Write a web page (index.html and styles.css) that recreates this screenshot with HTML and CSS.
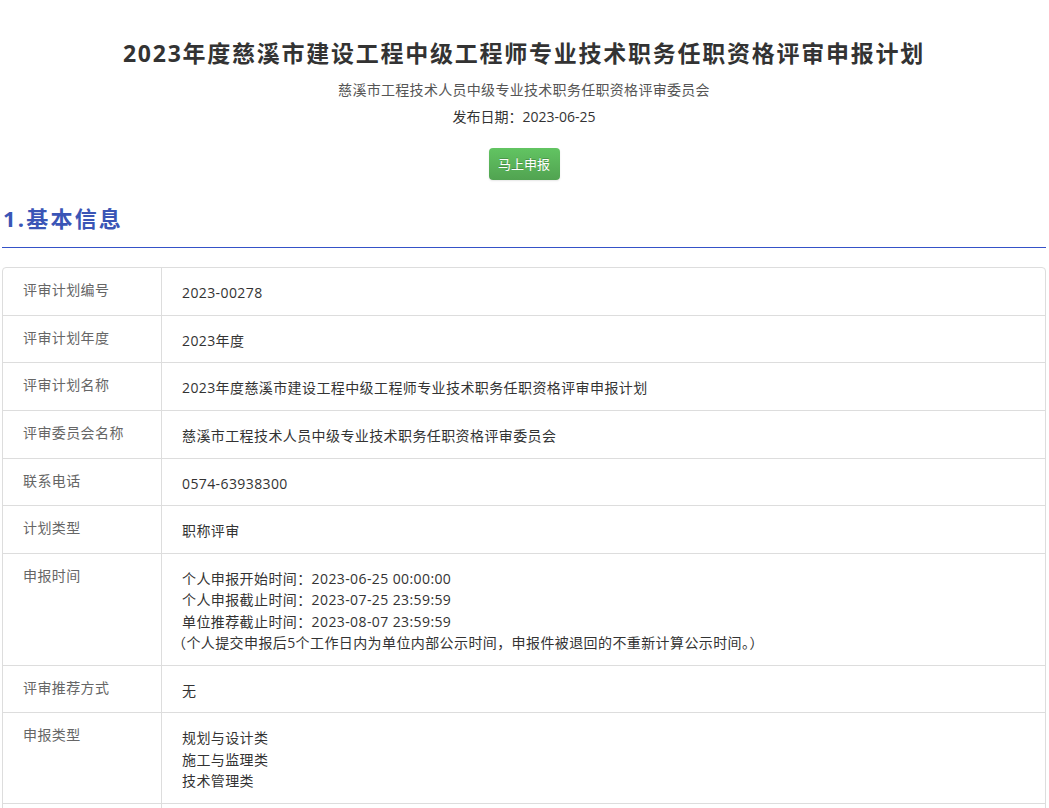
FILE: index.html
```html
<!DOCTYPE html>
<html lang="zh-CN">
<head>
<meta charset="utf-8">
<title>2023年度慈溪市建设工程中级工程师专业技术职务任职资格评审申报计划</title>
<link rel="stylesheet" href="styles.css">
</head>
<body>
<div class="page">
  <header class="head">
    <h1 class="title">2023年度慈溪市建设工程中级工程师专业技术职务任职资格评审申报计划</h1>
    <p class="org">慈溪市工程技术人员中级专业技术职务任职资格评审委员会</p>
    <p class="date">发布日期：2023-06-25</p>
    <div class="actions"><a class="btn" href="#">马上申报</a></div>
  </header>
  <h2 class="section">1.基本信息</h2>
  <div class="info">
    <div class="row"><div class="label">评审计划编号</div><div class="value">2023-00278</div></div>
    <div class="row"><div class="label">评审计划年度</div><div class="value">2023年度</div></div>
    <div class="row"><div class="label">评审计划名称</div><div class="value">2023年度慈溪市建设工程中级工程师专业技术职务任职资格评审申报计划</div></div>
    <div class="row"><div class="label">评审委员会名称</div><div class="value">慈溪市工程技术人员中级专业技术职务任职资格评审委员会</div></div>
    <div class="row"><div class="label">联系电话</div><div class="value">0574-63938300</div></div>
    <div class="row"><div class="label">计划类型</div><div class="value">职称评审</div></div>
    <div class="row"><div class="label">申报时间</div><div class="value">个人申报开始时间：2023-06-25 00:00:00<br>个人申报截止时间：2023-07-25 23:59:59<br>单位推荐截止时间：2023-08-07 23:59:59<br><span class="note">（个人提交申报后5个工作日内为单位内部公示时间，申报件被退回的不重新计算公示时间。）</span></div></div>
    <div class="row"><div class="label">评审推荐方式</div><div class="value">无</div></div>
    <div class="row"><div class="label">申报类型</div><div class="value">规划与设计类<br>施工与监理类<br>技术管理类</div></div>
    <div class="row"><div class="label">&nbsp;</div><div class="value">&nbsp;</div></div>
  </div>
</div>
</body>
</html>
```

FILE: styles.css
```css
html, body {
  margin: 0;
  padding: 0;
  background: #fff;
}
body {
  font-family: "Open Sans", "Noto Sans CJK SC", "Noto Sans", sans-serif;
  color: #333;
  font-size: 14px;
}
.page {
  padding: 0 3px 0 2px;
}
.head {
  text-align: center;
  padding-top: 36px;
}
.title {
  margin: 0;
  font-size: 23px;
  line-height: 34px;
  font-weight: bold;
  letter-spacing: 1.75px;
  color: #333;
}
.org {
  margin: 10px 0 0;
  line-height: 20px;
  font-size: 14px;
  letter-spacing: 0.3px;
  color: #555;
}
.date {
  margin: 7px 0 0;
  line-height: 20px;
  font-size: 14px;
  color: #333;
}
.actions {
  margin-top: 21px;
  display: flex;
  justify-content: center;
}
.btn {
  display: block;
  width: 71px;
  height: 32px;
  line-height: 32px;
  box-sizing: border-box;
  text-align: center;
  font-size: 13px;
  color: #fff;
  text-decoration: none;
  border-radius: 4px;
  background: linear-gradient(#62c462, #51a351);
  text-shadow: 0 -1px 0 rgba(0,0,0,0.2);
  box-shadow: 0 1px 2px rgba(0,0,0,0.1);
}
.section {
  margin: 23px 0 0;
  padding: 0 0 14px 1px;
  font-size: 22px;
  line-height: 30px;
  font-weight: bold;
  color: #3a55b6;
  border-bottom: 1px solid #3552c8;
  letter-spacing: 2.2px;
}
.info {
  margin-top: 19px;
  border: 1px solid #ddd;
  border-radius: 4px;
  overflow: hidden;
}
.row {
  display: flex;
  border-top: 1px solid #ddd;
}
.row:first-child {
  border-top: none;
}
.label {
  flex: 0 0 138px;
  padding: 11px 0 14px 20px;
  line-height: 21.33px;
  letter-spacing: 0.4px;
  color: #666;
  border-right: 1px solid #ddd;
}
.value {
  flex: 1;
  padding: 14px 20px 11.33px 20px;
  line-height: 21.33px;
  letter-spacing: 0.4px;
  color: #333;
}
.note {
  margin-left: -10px;
}
```
